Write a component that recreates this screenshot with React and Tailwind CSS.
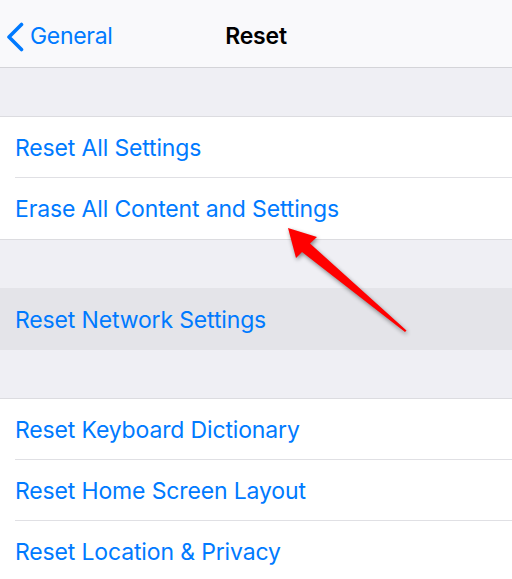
import React from "react";

const font = { fontFamily: "Inter, 'Noto Sans', 'Liberation Sans', sans-serif" };

function Row({ label, last = false, highlighted = false, tall = false }) {
  return (
    <div className={highlighted ? "bg-[#e4e4e9]" : "bg-white"}>
      <div
        className={
          "ml-[15px] pt-[2px] flex items-center text-[23px] text-[#007aff] tracking-[-0.15px] " +
          (tall ? "h-[62px] " : "h-[61px] ") +
          (last ? "" : "border-b border-[#e0e0e4]")
        }
      >
        <span>{label}</span>
      </div>
    </div>
  );
}

function Group({ children }) {
  return <div className="border-y border-[#dcdce0]">{children}</div>;
}

export default function App() {
  return (
    <div className="relative w-[512px] h-[579px] overflow-hidden bg-[#efeff4]" style={font}>
      {/* navigation bar */}
      <div className="relative h-[68px] bg-[#f9f9fb] border-b border-[#d4d4d8] flex items-center pt-[5px]">
        <div className="flex items-center pl-[6px] text-[#007aff]">
          <svg width="18" height="30" viewBox="0 0 18 30" className="mt-[1px]">
            <path d="M15.5 2.5 L3 15 L15.5 27.5" fill="none" stroke="#007aff" strokeWidth="3.6" strokeLinecap="round" strokeLinejoin="round" />
          </svg>
          <span className="ml-[6px] text-[23px] tracking-[-0.3px]">General</span>
        </div>
        <div className="absolute inset-0 pt-[5px] flex items-center justify-center text-[23px] font-semibold text-black tracking-[-0.2px]">
          Reset
        </div>
      </div>

      <div className="h-[48px]" />
      <Group>
        <Row label="Reset All Settings" />
        <Row label="Erase All Content and Settings" last />
      </Group>

      <div className="h-[48px]" />
      <Row label="Reset Network Settings" last highlighted tall />

      <div className="h-[48px]" />
      <Group>
        <Row label="Reset Keyboard Dictionary" />
        <Row label="Reset Home Screen Layout" />
        <Row label="Reset Location & Privacy" last />
      </Group>

      {/* callout arrow */}
      <svg
        className="absolute left-0 top-0 pointer-events-none"
        width="512"
        height="579"
        viewBox="0 0 512 579"
        style={{ filter: "drop-shadow(1px 2px 2px rgba(0,0,0,0.45))" }}
      >
        <polygon
          points="288,228 317,237 310,243.5 406.5,330.5 405,332 302,252 296,258"
          fill="#ff0000"
        />
      </svg>
    </div>
  );
}
